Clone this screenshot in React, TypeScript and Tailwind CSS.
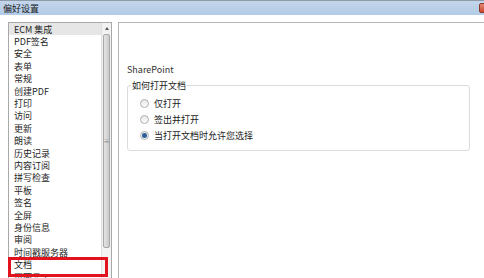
const items = [
  "ECM 集成",
  "PDF签名",
  "安全",
  "表单",
  "常规",
  "创建PDF",
  "打印",
  "访问",
  "更新",
  "朗读",
  "历史记录",
  "内容订阅",
  "拼写检查",
  "平板",
  "签名",
  "全屏",
  "身份信息",
  "审阅",
  "时间戳服务器",
  "文档",
  "页面显示",
];

const font = { fontFamily: '"Noto Sans CJK SC", "Noto Sans", sans-serif' };

function Radio({ checked, label }: { checked?: boolean; label: string }) {
  return (
    <div className="flex h-4 items-center gap-[5px]">
      <span className="flex h-[9px] w-[9px] items-center justify-center rounded-full border border-[#b0b0b0] bg-gradient-to-b from-[#e6e6e6] to-[#fdfdfd]">
        {checked && <span className="h-[5px] w-[5px] rounded-full bg-[#2f5f9a]" />}
      </span>
      <span className="text-[9px] leading-none text-[#1a1a1a]">{label}</span>
    </div>
  );
}

export default function App() {
  return (
    <div className="flex h-[278px] w-[484px] flex-col overflow-hidden bg-white" style={font}>
      {/* title bar */}
      <div className="flex h-[15px] shrink-0 items-center justify-between border-t border-[#8e9aa8] bg-gradient-to-b from-[#c3d6ec] to-[#b2cbe6] pl-[3px]">
        <span className="text-[9px] leading-none text-[#1b1b1b]">偏好设置</span>
        <span className="mr-[-4px] h-[10px] w-[9px] rounded-[2px] border border-[#8a3a2a] bg-gradient-to-b from-[#e48a74] to-[#c9452c]" />
      </div>
      <div className="flex flex-1 gap-[6px] bg-white pl-[8px] pt-[7px]">
        {/* category list */}
        <div className="relative flex w-[104px] shrink-0 border border-b-0 border-[#a9a9a9] bg-white">
          <div className="flex flex-1 flex-col">
            {items.map((it, i) => (
              <div
                key={it}
                className={`flex h-[12.4px] shrink-0 items-center pl-[5px] text-[9px] leading-none text-[#1e1e1e] ${
                  i === 0 ? "bg-[#e6e6e6]" : ""
                }`}
              >
                {it}
              </div>
            ))}
          </div>
          {/* scrollbar */}
          <div className="flex w-[10px] shrink-0 flex-col border-l border-[#e0e0e0] bg-[#f2f2f2]">
            <div className="flex h-[11px] items-center justify-center">
              <span className="h-0 w-0 border-x-[2.5px] border-b-[3px] border-x-transparent border-b-[#555]" />
            </div>
            <div className="mx-[1px] flex h-[214px] items-center justify-center rounded-[2px] border border-[#a8a8a8] bg-gradient-to-r from-[#e4e4e4] via-[#d8d8d8] to-[#c9c9c9]">
              <span className="text-[6px] leading-none text-[#777]">≡</span>
            </div>
            <div className="flex-1 bg-[#f4f4f4]" />
          </div>
          {/* highlight */}
          <div className="absolute left-[-1px] top-[234px] h-[20px] w-[100px] border-[3px] border-[#e3121f]" />
        </div>
        {/* settings panel */}
        <div className="flex flex-1 flex-col border border-r-0 border-b-0 border-[#b5b5b5] bg-white pl-[8px] pr-[14px] pt-[42px]">
          <div className="text-[9px] leading-none text-[#333]">SharePoint</div>
          <div className="relative mt-[11px] h-[66px] rounded-[3px] border border-[#dcdcdc] pl-[12px] pt-[9px]">
            <span className="absolute left-[3px] top-[-5px] bg-white px-[1px] text-[9px] leading-none text-[#1e1e1e]">
              如何打开文档
            </span>
            <Radio label="仅打开" />
            <Radio label="签出并打开" />
            <Radio label="当打开文档时允许您选择" checked />
          </div>
        </div>
      </div>
    </div>
  );
}
